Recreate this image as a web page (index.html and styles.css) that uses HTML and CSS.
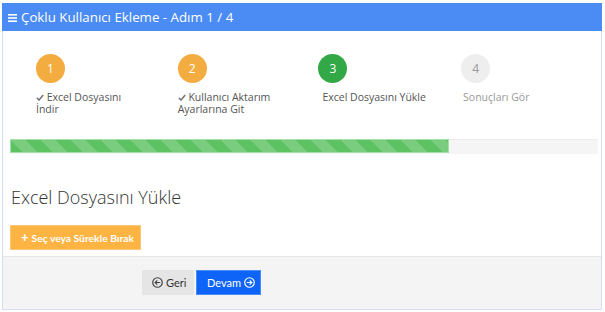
FILE: index.html
```html
<!DOCTYPE html>
<html lang="tr">
<head>
	<meta charset="UTF-8">
	<title>Çoklu Kullanıcı Ekleme</title>
	<link rel="stylesheet" href="styles.css">
</head>
<body>
	<div class="panel">
		<div class="panel-head">
			<svg class="menu-ico" width="9" height="8" viewBox="0 0 9 8"><rect y="0" width="9" height="1.6" fill="#fff"/><rect y="3.2" width="9" height="1.6" fill="#fff"/><rect y="6.4" width="9" height="1.6" fill="#fff"/></svg>
			<span>Çoklu Kullanıcı Ekleme - Adım 1 / 4</span>
		</div>
		<div class="panel-body">
			<ul class="steps">
				<li class="done">
					<span class="num">1</span>
					<p><svg class="chk" width="8" height="7" viewBox="0 0 8 7"><path d="M0.8 3.8L3 6 7.2 1" fill="none" stroke="#777" stroke-width="1.6"/></svg> Excel Dosyasını İndir</p>
				</li>
				<li class="done">
					<span class="num">2</span>
					<p><svg class="chk" width="8" height="7" viewBox="0 0 8 7"><path d="M0.8 3.8L3 6 7.2 1" fill="none" stroke="#777" stroke-width="1.6"/></svg> Kullanıcı Aktarım Ayarlarına Git</p>
				</li>
				<li class="active">
					<span class="num">3</span>
					<p>Excel Dosyasını Yükle</p>
				</li>
				<li class="todo">
					<span class="num">4</span>
					<p>Sonuçları Gör</p>
				</li>
			</ul>
			<div class="progress">
				<div class="bar" style="width: 74.6%"></div>
			</div>
			<h3 class="title">Excel Dosyasını Yükle</h3>
			<a class="btn btn-upload" href="#"><b class="plus">+</b> Seç veya Sürekle Bırak</a>
		</div>
		<div class="panel-foot">
			<a class="btn btn-back" href="#">
				<svg width="11" height="11" viewBox="0 0 12 12"><circle cx="6" cy="6" r="5.2" fill="none" stroke="#444" stroke-width="1.3"/><path d="M9 6H3.6M5.8 3.6L3.4 6l2.4 2.4" fill="none" stroke="#444" stroke-width="1.3"/></svg>
				Geri
			</a>
			<a class="btn btn-next" href="#">
				Devam
				<svg width="11" height="11" viewBox="0 0 12 12"><circle cx="6" cy="6" r="5.2" fill="none" stroke="#fff" stroke-width="1.3"/><path d="M3 6h5.4M6.2 3.6L8.6 6 6.2 8.4" fill="none" stroke="#fff" stroke-width="1.3"/></svg>
			</a>
		</div>
	</div>
</body>
</html>
```

FILE: styles.css
```css
*{
	margin: 0;
	padding: 0;
	list-style-type: none;
	text-decoration: none;
	box-sizing: border-box;
}
body{
	background: #fff;
	font-family: "Open Sans", "Liberation Sans", sans-serif;
	color: #333;
	padding: 3px 3px 0 2px;
}
.panel{
	width: 600px;
	height: 307px;
	border: 1px solid #d3def2;
	border-top: none;
	display: flex;
	flex-direction: column;
}
.panel-head{
	height: 28px;
	background: #4b8bf4;
	color: #fff;
	font-size: 13.3px;
	display: flex;
	align-items: center;
	padding-left: 6px;
	margin: 0 -1px;
}
.menu-ico{
	margin-right: 4px;
	margin-top: 1px;
}
.panel-body{
	padding: 23px 3px 0 7px;
	flex: 1;
}
.steps{
	display: grid;
	grid-template-columns: repeat(4, 141.7px);
	margin-left: 26px;
	height: 85px;
}
.steps li{
	display: flex;
	flex-direction: column;
	align-items: flex-start;
}
.num{
	width: 29px;
	height: 29px;
	border-radius: 50%;
	display: flex;
	align-items: center;
	justify-content: center;
	font-size: 12px;
	color: #fff;
}
.done .num{
	background: #f3ac3f;
}
.active .num{
	background: #33a846;
	margin-left: -1px;
}
.todo .num{
	background: #eee;
	color: #999;
}
.steps p{
	margin-top: 9px;
	font-size: 10.5px;
	line-height: 11.5px;
	color: #555;
	width: 106px;
}
.active p{
	margin-left: 3px;
}
.todo p{
	margin-left: 2px;
	color: #999;
}
.chk{
	vertical-align: 0;
}
.progress{
	height: 15px;
	background: #f5f5f5;
	border-top: 1px solid #ebebeb;
}
.bar{
	height: 14px;
	margin-top: -1px;
	background-color: #5dc262;
	background-image: linear-gradient(45deg, rgba(255,255,255,.18) 25%, transparent 25%, transparent 50%, rgba(255,255,255,.18) 50%, rgba(255,255,255,.18) 75%, transparent 75%, transparent);
	background-size: 30px 30px;
	border: 1px solid #a6dfa9;
}
.title{
	font-size: 18px;
	font-weight: 300;
	color: #333;
	margin: 32px 0 0 1px;
	line-height: 22px;
}
.btn{
	display: inline-flex;
	align-items: center;
	height: 25px;
	font-size: 10px;
	font-family: "Lato", "Open Sans", sans-serif;
}
.btn-upload{
	margin-top: 17px;
	width: 131px;
	padding-left: 10px;
	background: #feb443;
	color: #fff;
	font-weight: bold;
	font-size: 10.3px;
	border: 1px solid #f9c77a;
}
.plus{
	font-size: 13px;
	margin-right: 3px;
	line-height: 1;
}
.panel-foot{
	height: 53px;
	background: #f4f4f4;
	border-top: 1px solid #e6e6e6;
	padding: 13px 0 0 139px;
	display: flex;
	align-items: flex-start;
	gap: 2px;
}
.btn-back{
	width: 52px;
	background: #e5e5e5;
	color: #333;
	font-size: 11px;
	padding-left: 10px;
	gap: 3px;
}
.btn-next{
	width: 65px;
	background: #0f64f8;
	color: #fff;
	font-size: 11px;
	padding-left: 10px;
	gap: 3px;
	border: 1px solid #4a8cf8;
}
```
